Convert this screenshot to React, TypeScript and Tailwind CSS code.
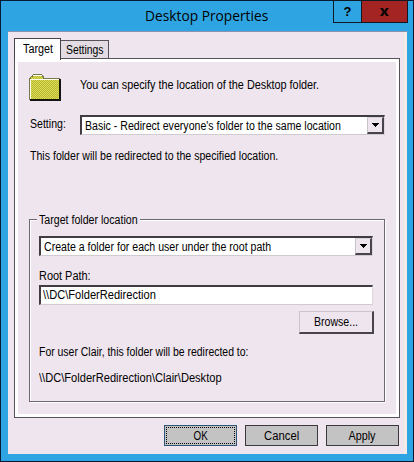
import type { ReactNode } from 'react';

const label = 'block w-max whitespace-nowrap text-[12px] leading-[14px]';

function Label({ children, className = '' }: { children: ReactNode; className?: string }) {
  return <span className={`${label} ${className}`}>{children}</span>;
}

function FolderIcon() {
  return (
    <svg width="33" height="28" viewBox="0 0 33 28" shapeRendering="crispEdges" className="block">
      <defs>
        <pattern id="dither" width="2" height="2" patternUnits="userSpaceOnUse">
          <rect width="2" height="2" fill="#dddc58" />
          <rect width="1" height="1" fill="#b9b931" />
          <rect x="1" y="1" width="1" height="1" fill="#b9b931" />
        </pattern>
      </defs>
      <path d="M0 26V4h1V3h1V2h1V1h1V0h9v1h1v1h1v2h16v22H0z" fill="#77774a" />
      <path d="M1 25V5h1V3h2V1h9v2h1v2h16v20z" fill="url(#dither)" />
      <path d="M1 25V5h29v1H2v19zM4 1h9v1H4z" fill="#fffff0" />
      <path d="M1 25h29V5h2v22H1z" fill="#151510" />
    </svg>
  );
}

function Select({ children, className = '' }: { children: ReactNode; className?: string }) {
  return (
    <div className={`flex h-5 border-t-2 border-l-2 border-r border-b border-t-[#403c42] border-l-[#403c42] border-r-[#ddd6dc] border-b-[#d0cbd0] bg-white ${className}`}>
      <div className="w-0 flex-1 pt-[2px] pl-[3px]">{children}</div>
      <div className="flex h-[17px] w-[17px] shrink-0 items-center justify-center border-t border-l border-r-2 border-b-2 border-t-[#d8d3d8] border-l-[#c9c3c9] border-r-[#49434d] border-b-[#49434d] bg-[#efe5ee]">
        <svg width="7" height="4" viewBox="0 0 7 4" shapeRendering="crispEdges">
          <path d="M0 0h7v1H6v1H5v1H4v1H3V3H2V2H1V1H0z" fill="#000" />
        </svg>
      </div>
    </div>
  );
}

function FooterButton({ children, focused = false }: { children: ReactNode; focused?: boolean }) {
  return (
    <button className={`h-[21px] w-[73px] border bg-[#c4c3c4] p-px ${focused ? 'border-[#2e5478]' : 'border-[#3c393c]'}`}>
      <span className={`flex h-full items-center justify-center border ${focused ? 'border-dotted border-black' : 'border-transparent'}`}>
        {children}
      </span>
    </button>
  );
}

export default function App() {
  return (
    <div className="flex h-[462px] w-[414px] flex-col border border-[#071c32] bg-[#2ea5e2] font-['Liberation_Sans',Arial,sans-serif] text-black">
      <header className="flex h-[30px] shrink-0">
        <h1 className="w-[332px] pt-[3px] pl-[144px] font-['Open_Sans',sans-serif] text-[15px] leading-[22px] whitespace-nowrap">
          <span className="block w-max origin-left scale-x-[0.917]">Desktop Properties</span>
        </h1>
        <div className="-mt-px flex h-[23px] w-[75px] border border-[#101820]">
          <button className="flex w-[28px] items-center justify-center border-r border-[#101820] text-[13px] font-bold">?</button>
          <button className="flex flex-1 items-center justify-center bg-[#a32422]">
            <svg width="9" height="8" viewBox="0 0 9 8">
              <path d="M0 0h3l1.5 2.4L6 0h3L6.2 4 9 8H6L4.5 5.6 3 8H0l2.8-4z" fill="#100808" />
            </svg>
          </button>
        </div>
      </header>

      <main className="mx-[7px] flex h-[423px] w-[399px] flex-col border-t border-[#8c91b0] bg-[#efe5ee] px-[6px] shadow-[inset_-3px_0_0_#f4ebe6]">
        <div className="relative z-10 -mb-px flex h-[27px] items-end">
          <div className="mb-[-1px] h-[22px] w-[47px] border-x border-t border-[#47424a] bg-white pt-[3px] pl-[8px]">
            <Label className="origin-left scale-x-[0.9]">Target</Label>
          </div>
          <div className="h-[19px] w-[48px] border-y border-r border-[#57525a] bg-[#e3dce3] pt-[2px] pl-[5px]">
            <Label className="origin-left scale-x-[0.865]">Settings</Label>
          </div>
        </div>

        <section className="h-[360px] w-[386px] border border-[#57525a] bg-white p-[3px]">
          <div className="flex h-full flex-col bg-[#efe5ee] pl-[12px]">
            <div className="flex h-[53px] pt-[12px]">
              <div className="-ml-px w-[51px]">
                <FolderIcon />
              </div>
              <Label className="mt-[4px] origin-left scale-x-[0.902]">You can specify the location of the Desktop folder.</Label>
            </div>
            <div className="flex">
              <div className="w-[50px] pt-[2px]">
                <Label className="origin-left scale-x-[0.88]">Setting:</Label>
              </div>
              <Select className="w-[305px]">
                <Label className="origin-left scale-x-[0.883]">Basic - Redirect everyone's folder to the same location</Label>
              </Select>
            </div>
            <Label className="mt-[14px] origin-left scale-x-[0.882]">This folder will be redirected to the specified location.</Label>

            <div className="mt-[56px] -ml-px h-[183px] w-[356px] border border-[#6d6870] pl-[9px] shadow-[1px_1px_0_#fff,inset_1px_1px_0_#fff]">
              <div className="-mt-[7px] -ml-[2px] h-[14px] w-[103px] bg-[#efe5ee] pl-[2px]">
                <Label className="origin-left scale-x-[0.885]">Target folder location</Label>
              </div>
              <Select className="mt-[9px] w-[334px]">
                <Label className="origin-left scale-x-[0.882]">Create a folder for each user under the root path</Label>
              </Select>
              <Label className="mt-[13px] origin-left scale-x-[0.91]">Root Path:</Label>
              <div className="mt-[2px] h-[20px] w-[334px] border-t-2 border-r border-b border-l-2 border-t-[#403c42] border-r-[#ddd6dc] border-b-[#d0cbd0] border-l-[#403c42] bg-white pt-px pl-[2px]">
                <Label className="origin-left scale-x-[0.925]">\\DC\FolderRedirection</Label>
              </div>
              <button className="mt-[6px] ml-[260px] flex h-[23px] w-[75px] items-center justify-center border-t border-r-2 border-b-2 border-l border-t-[#cbc4cb] border-r-[#49434d] border-b-[#49434d] border-l-[#cbc4cb] bg-[#efe5ee]">
                <Label className="scale-x-[0.88]">Browse...</Label>
              </button>
              <Label className="mt-[11px] origin-left scale-x-[0.87]">For user Clair, this folder will be redirected to:</Label>
              <Label className="mt-[12px] origin-left scale-x-[0.925]">\\DC\FolderRedirection\Clair\Desktop</Label>
            </div>
          </div>
        </section>

        <footer className="mt-[7px] flex justify-end gap-[8px] pr-[2px]">
          <FooterButton focused><Label className="scale-x-[0.82]">OK</Label></FooterButton>
          <FooterButton><Label className="scale-x-[0.94]">Cancel</Label></FooterButton>
          <FooterButton><Label className="scale-x-[0.9]">Apply</Label></FooterButton>
        </footer>
      </main>
    </div>
  );
}
